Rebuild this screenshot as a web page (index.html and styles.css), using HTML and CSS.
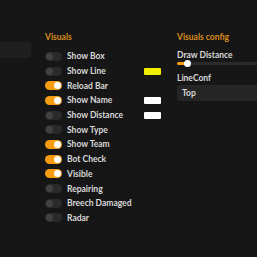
FILE: index.html
```html
<!DOCTYPE html>
<html lang="en">
<head>
    <meta charset="UTF-8">
    <title>Visuals</title>
    <link rel="stylesheet" href="styles.css">
</head>
<body>
    <div class="menu">
        <div class="side">
            <div class="side-item"></div>
        </div>
        <div class="visuals">
            <h2 class="title">Visuals</h2>
            <div class="option"><span class="toggle"></span><span class="label">Show Box</span></div>
            <div class="option"><span class="toggle"></span><span class="label">Show Line</span><span class="swatch yellow"></span></div>
            <div class="option"><span class="toggle on"></span><span class="label">Reload Bar</span></div>
            <div class="option"><span class="toggle on"></span><span class="label">Show Name</span><span class="swatch"></span></div>
            <div class="option"><span class="toggle"></span><span class="label">Show Distance</span><span class="swatch"></span></div>
            <div class="option"><span class="toggle"></span><span class="label">Show Type</span></div>
            <div class="option"><span class="toggle on"></span><span class="label">Show Team</span></div>
            <div class="option"><span class="toggle on"></span><span class="label">Bot Check</span></div>
            <div class="option"><span class="toggle on"></span><span class="label">Visible</span></div>
            <div class="option"><span class="toggle"></span><span class="label">Repairing</span></div>
            <div class="option"><span class="toggle"></span><span class="label">Breech Damaged</span></div>
            <div class="option"><span class="toggle"></span><span class="label">Radar</span></div>
        </div>
        <div class="config">
            <h2 class="title">Visuals config</h2>
            <div class="field-label">Draw Distance</div>
            <div class="slider">
                <div class="slider-fill" style="width: 10px;"></div>
                <div class="slider-thumb"></div>
            </div>
            <div class="field-label">LineConf</div>
            <div class="select">Top</div>
        </div>
    </div>
</body>
</html>
```

FILE: styles.css
```css
body {
    margin: 0;
    background-color: #161616;
    font-family: 'Lato', sans-serif;
    color: #d9d9d9;
    overflow: hidden;
}
.menu {
    display: flex;
    padding-top: 31px;
}
.side {
    flex-shrink: 0;
    width: 31px;
    padding-top: 11px;
}
.side-item {
    height: 16px;
    background: #1f1f1f;
    border-radius: 0 3px 3px 0;
}
.visuals {
    flex-shrink: 0;
    width: 116px;
    margin-left: 14px;
}
.title {
    margin: 0 0 6px;
    font-size: 8.5px;
    font-weight: 700;
    color: #d98c1c;
    line-height: 12px;
}
.option {
    display: flex;
    align-items: center;
    height: 14.7px;
}
.toggle {
    position: relative;
    flex-shrink: 0;
    width: 17px;
    height: 9px;
    border-radius: 5px;
    background: #2a2a2a;
}
.toggle::after {
    content: '';
    position: absolute;
    left: 1px;
    top: 1px;
    width: 7px;
    height: 7px;
    border-radius: 50%;
    background: #414141;
}
.toggle.on {
    background: #f59c12;
}
.toggle.on::after {
    left: 9px;
    background: #ffffff;
}
.label {
    flex: 1;
    margin-left: 5px;
    font-size: 8.5px;
    font-weight: 700;
    white-space: nowrap;
}
.swatch {
    width: 17px;
    height: 7px;
    border-radius: 1px;
    background: #ffffff;
}
.swatch.yellow {
    background: #f2ee00;
}
.config {
    flex-shrink: 0;
    width: 90px;
    margin-left: 16px;
}
.config .title {
    margin-bottom: 7px;
}
.field-label {
    font-size: 8.5px;
    font-weight: 700;
    line-height: 11px;
}
.slider {
    position: relative;
    height: 3px;
    margin: 1px 0 7.5px;
    background: #2b2b2b;
    border-radius: 2px;
}
.slider-fill {
    height: 100%;
    background: #f59c12;
    border-radius: 2px;
}
.slider-thumb {
    position: absolute;
    left: 7px;
    top: -2px;
    width: 7px;
    height: 7px;
    border-radius: 50%;
    background: #ffffff;
}
.select {
    margin-top: 1.5px;
    height: 16px;
    padding-left: 5px;
    background: #252525;
    border-radius: 2px;
    font-size: 8.5px;
    font-weight: 700;
    line-height: 16px;
}
```
